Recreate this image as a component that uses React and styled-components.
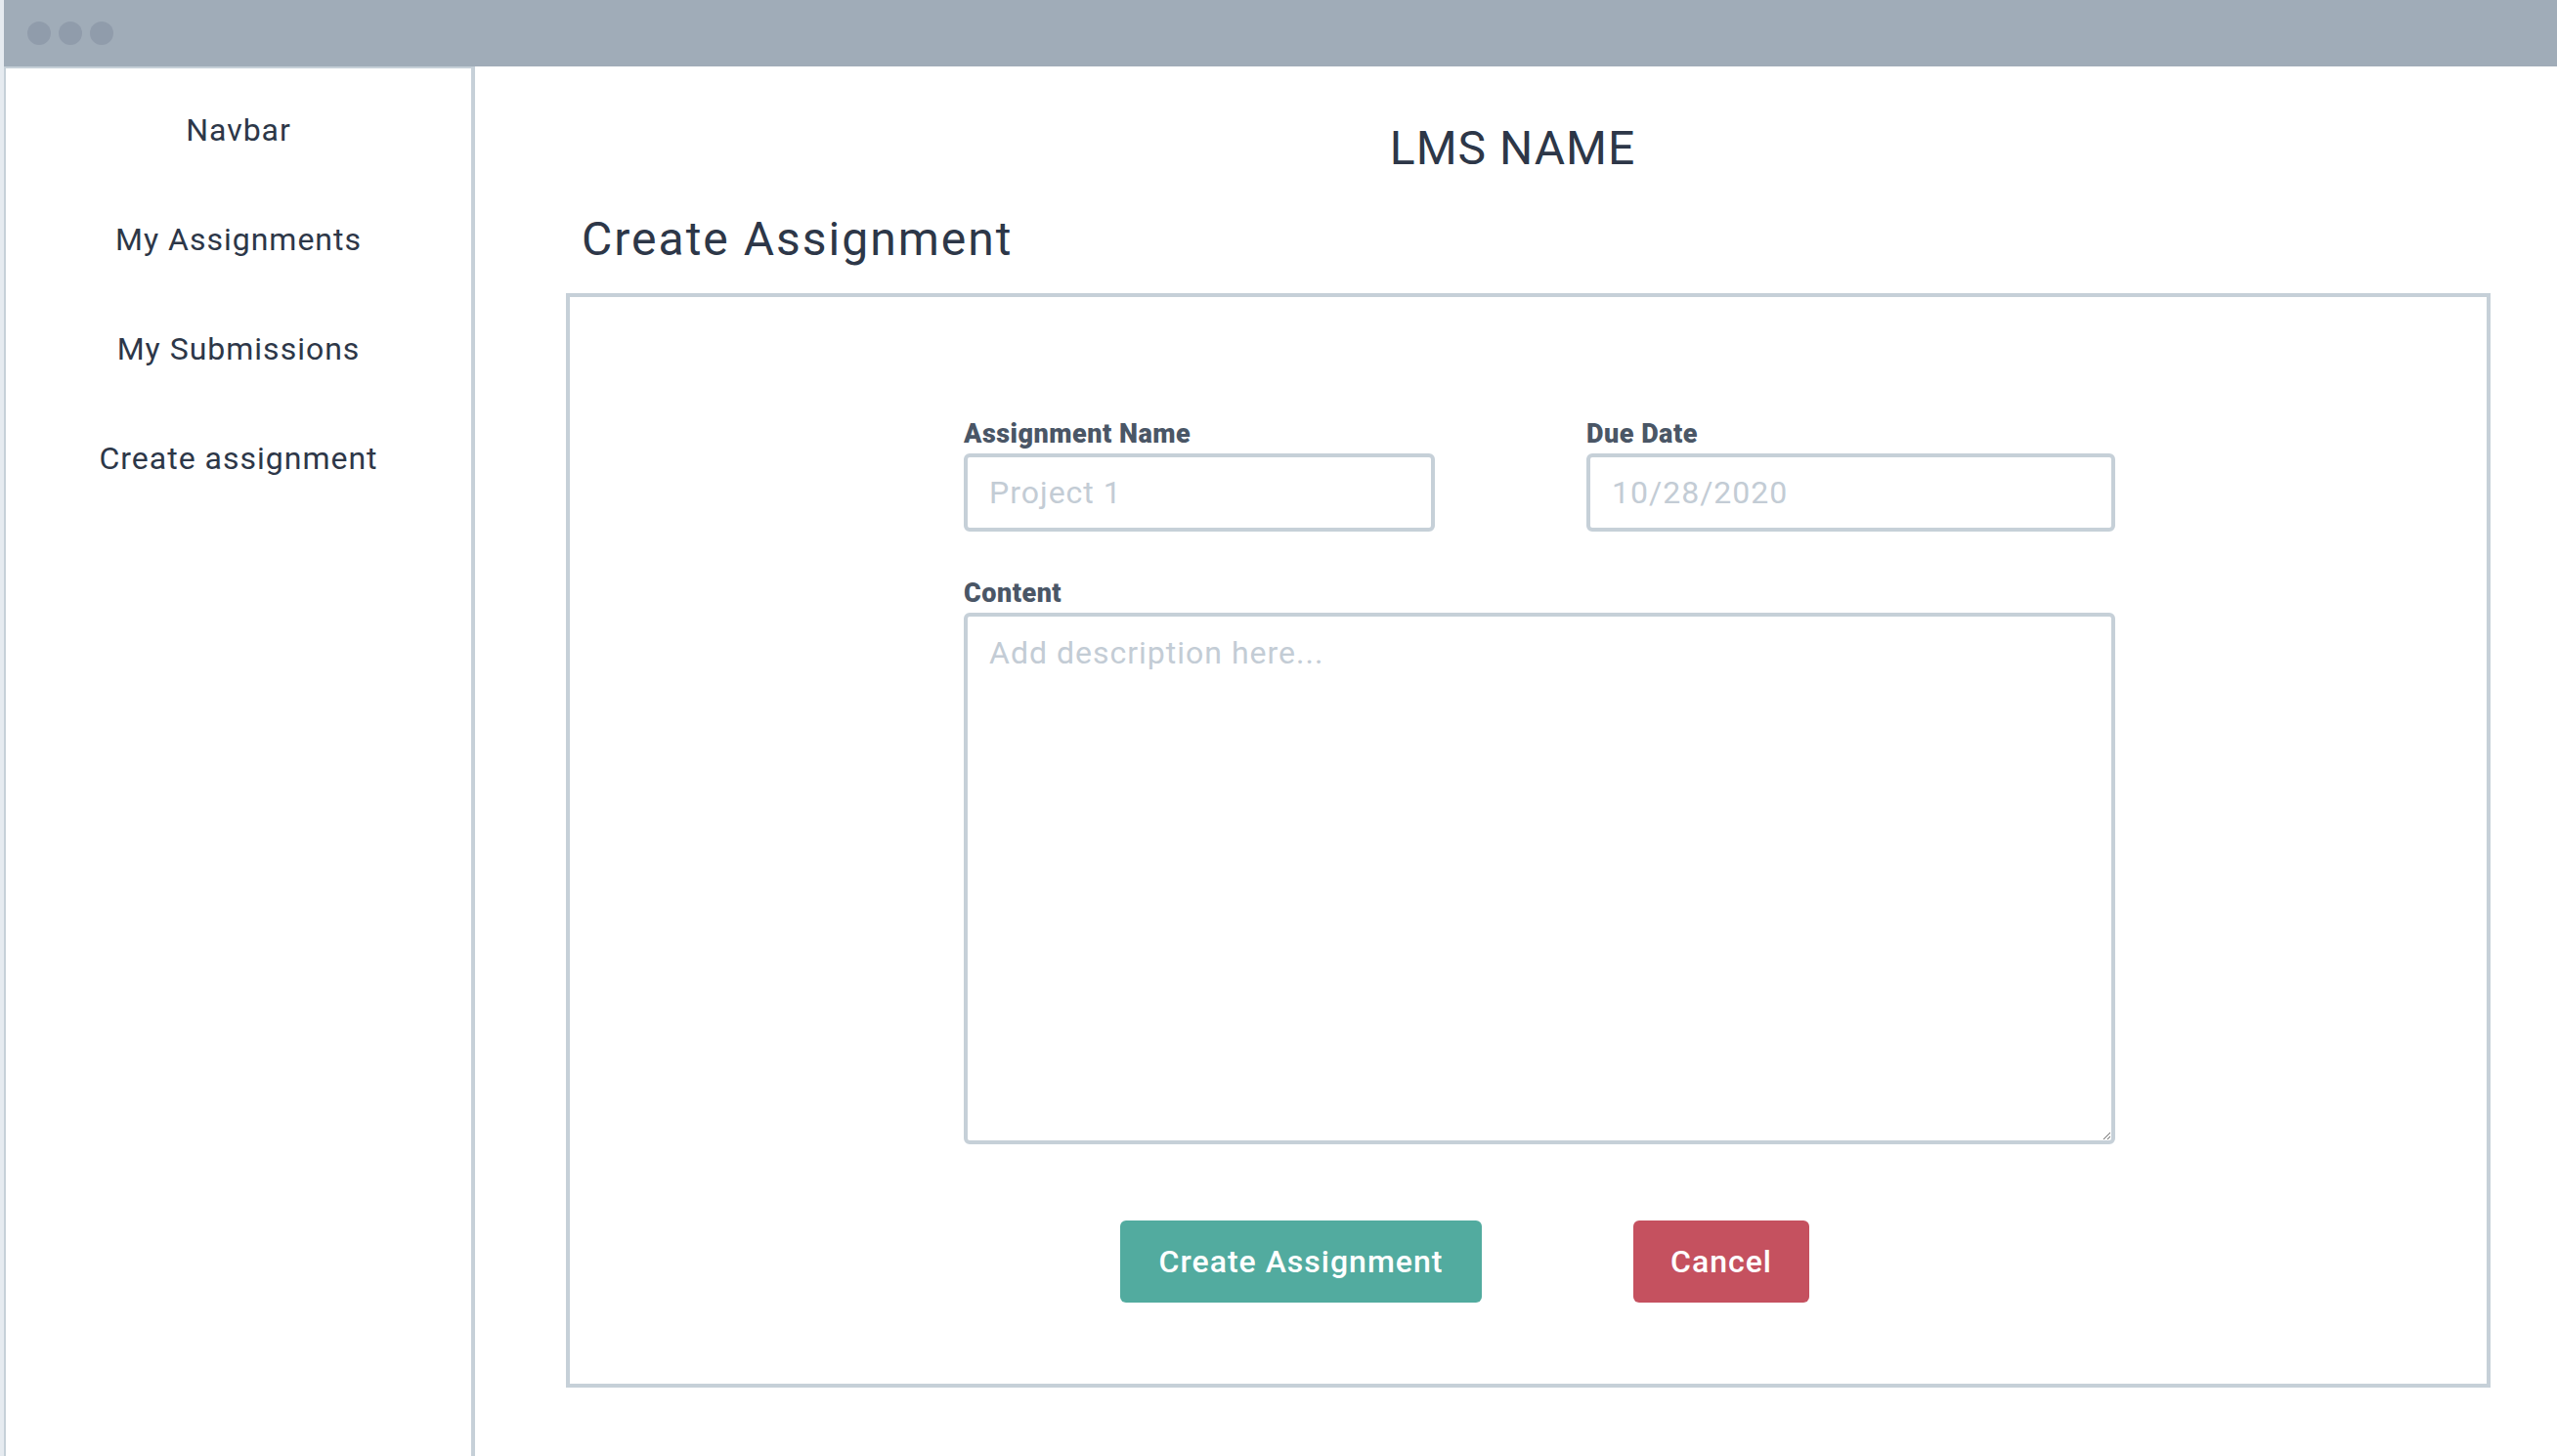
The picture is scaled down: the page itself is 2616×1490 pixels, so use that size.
import styled, { createGlobalStyle } from "styled-components";

const GlobalStyle = createGlobalStyle`
  html, body {
    margin: 0;
    padding: 0;
    background: #e6ebf0;
  }
  * {
    box-sizing: border-box;
  }
`;

const navItems = ["Navbar", "My Assignments", "My Submissions", "Create assignment"];

const App = () => {
  return (
    <>
      <GlobalStyle />
      <Window>
        <TitleBar>
          <Dot />
          <Dot />
          <Dot />
        </TitleBar>

        <Body>
          <Sidebar>
            {navItems.map((item) => (
              <NavItem key={item}>{item}</NavItem>
            ))}
          </Sidebar>

          <Main>
            <AppName>LMS NAME</AppName>
            <PageTitle>Create Assignment</PageTitle>

            <FormBox>
              <FieldRow>
                <Field $width="482px">
                  <Label>Assignment Name</Label>
                  <Input placeholder="Project 1" />
                </Field>
                <Field $width="541px">
                  <Label>Due Date</Label>
                  <Input placeholder="10/28/2020" />
                </Field>
              </FieldRow>

              <Field $width="1178px" $top="49px">
                <Label>Content</Label>
                <TextArea placeholder="Add description here..." />
              </Field>

              <ButtonRow>
                <Button $color="#52ab9f" $width="370px">
                  Create Assignment
                </Button>
                <Button $color="#c5515f" $width="180px">
                  Cancel
                </Button>
              </ButtonRow>
            </FormBox>
          </Main>
        </Body>
      </Window>
    </>
  );
};

export default App;

const Window = styled.div`
  margin-left: 4px;
  height: 100vh;
  display: flex;
  flex-direction: column;
  background: #ffffff;
  font-family: Roboto, "Liberation Sans", sans-serif;
  color: #2d3748;
  overflow: hidden;
`;

const TitleBar = styled.div`
  height: 68px;
  flex-shrink: 0;
  background: #a0acb8;
  display: flex;
  align-items: center;
  gap: 8px;
  padding-left: 24px;
`;

const Dot = styled.span`
  width: 24px;
  height: 24px;
  border-radius: 50%;
  background: #909cab;
`;

const Body = styled.div`
  flex: 1;
  display: flex;
  min-height: 0;
`;

const Sidebar = styled.nav`
  width: 482px;
  flex-shrink: 0;
  border: 2px solid #c6d0d8;
  border-right-width: 4px;
  border-bottom: none;
  display: flex;
  flex-direction: column;
  align-items: center;
  gap: 72px;
  padding-top: 43px;
`;

const NavItem = styled.div`
  font-size: 32px;
  line-height: 40px;
  letter-spacing: 1px;
  color: #2d3748;
`;

const Main = styled.main`
  flex: 1;
  display: flex;
  flex-direction: column;
  padding: 56px 68px 0 93px;
`;

const AppName = styled.h1`
  margin: 0;
  padding-right: 32px;
  text-align: center;
  font-size: 48px;
  line-height: 56px;
  font-weight: 400;
  letter-spacing: 1px;
  color: #2d3748;
`;

const PageTitle = styled.h2`
  margin: 37px 0 27px 16px;
  font-size: 48px;
  line-height: 56px;
  font-weight: 400;
  letter-spacing: 2px;
  color: #2d3748;
`;

const FormBox = styled.section`
  border: 4px solid #c6d0d8;
  padding: 126px 0 83px 403px;
  display: flex;
  flex-direction: column;
  align-items: flex-start;
`;

const FieldRow = styled.div`
  display: flex;
  gap: 155px;
`;

const Field = styled.div`
  width: ${(p) => p.$width};
  margin-top: ${(p) => p.$top || "0"};
  display: flex;
  flex-direction: column;
  gap: 6px;
`;

const Label = styled.label`
  font-size: 27px;
  line-height: 28px;
  font-weight: 900;
  letter-spacing: 0.5px;
  color: #4a5666;
`;

const Input = styled.input`
  height: 80px;
  width: 100%;
  border: 4px solid #c6d0d8;
  border-radius: 6px;
  padding: 0 22px;
  font-family: inherit;
  font-size: 32px;
  letter-spacing: 1px;
  color: #2d3748;
  outline: none;

  &::placeholder {
    color: #c3ccd5;
  }
`;

const TextArea = styled.textarea`
  height: 544px;
  width: 100%;
  border: 4px solid #c6d0d8;
  border-radius: 6px;
  padding: 19px 22px;
  font-family: inherit;
  font-size: 32px;
  line-height: 36px;
  letter-spacing: 1px;
  color: #2d3748;
  outline: none;
  resize: both;

  &::placeholder {
    color: #c3ccd5;
  }
`;

const ButtonRow = styled.div`
  display: flex;
  gap: 155px;
  margin: 78px 0 0 160px;
`;

const Button = styled.button`
  width: ${(p) => p.$width};
  height: 84px;
  border: none;
  border-radius: 6px;
  background: ${(p) => p.$color};
  color: #ffffff;
  font-family: inherit;
  font-size: 32px;
  font-weight: 500;
  letter-spacing: 1px;
  cursor: pointer;
`;
